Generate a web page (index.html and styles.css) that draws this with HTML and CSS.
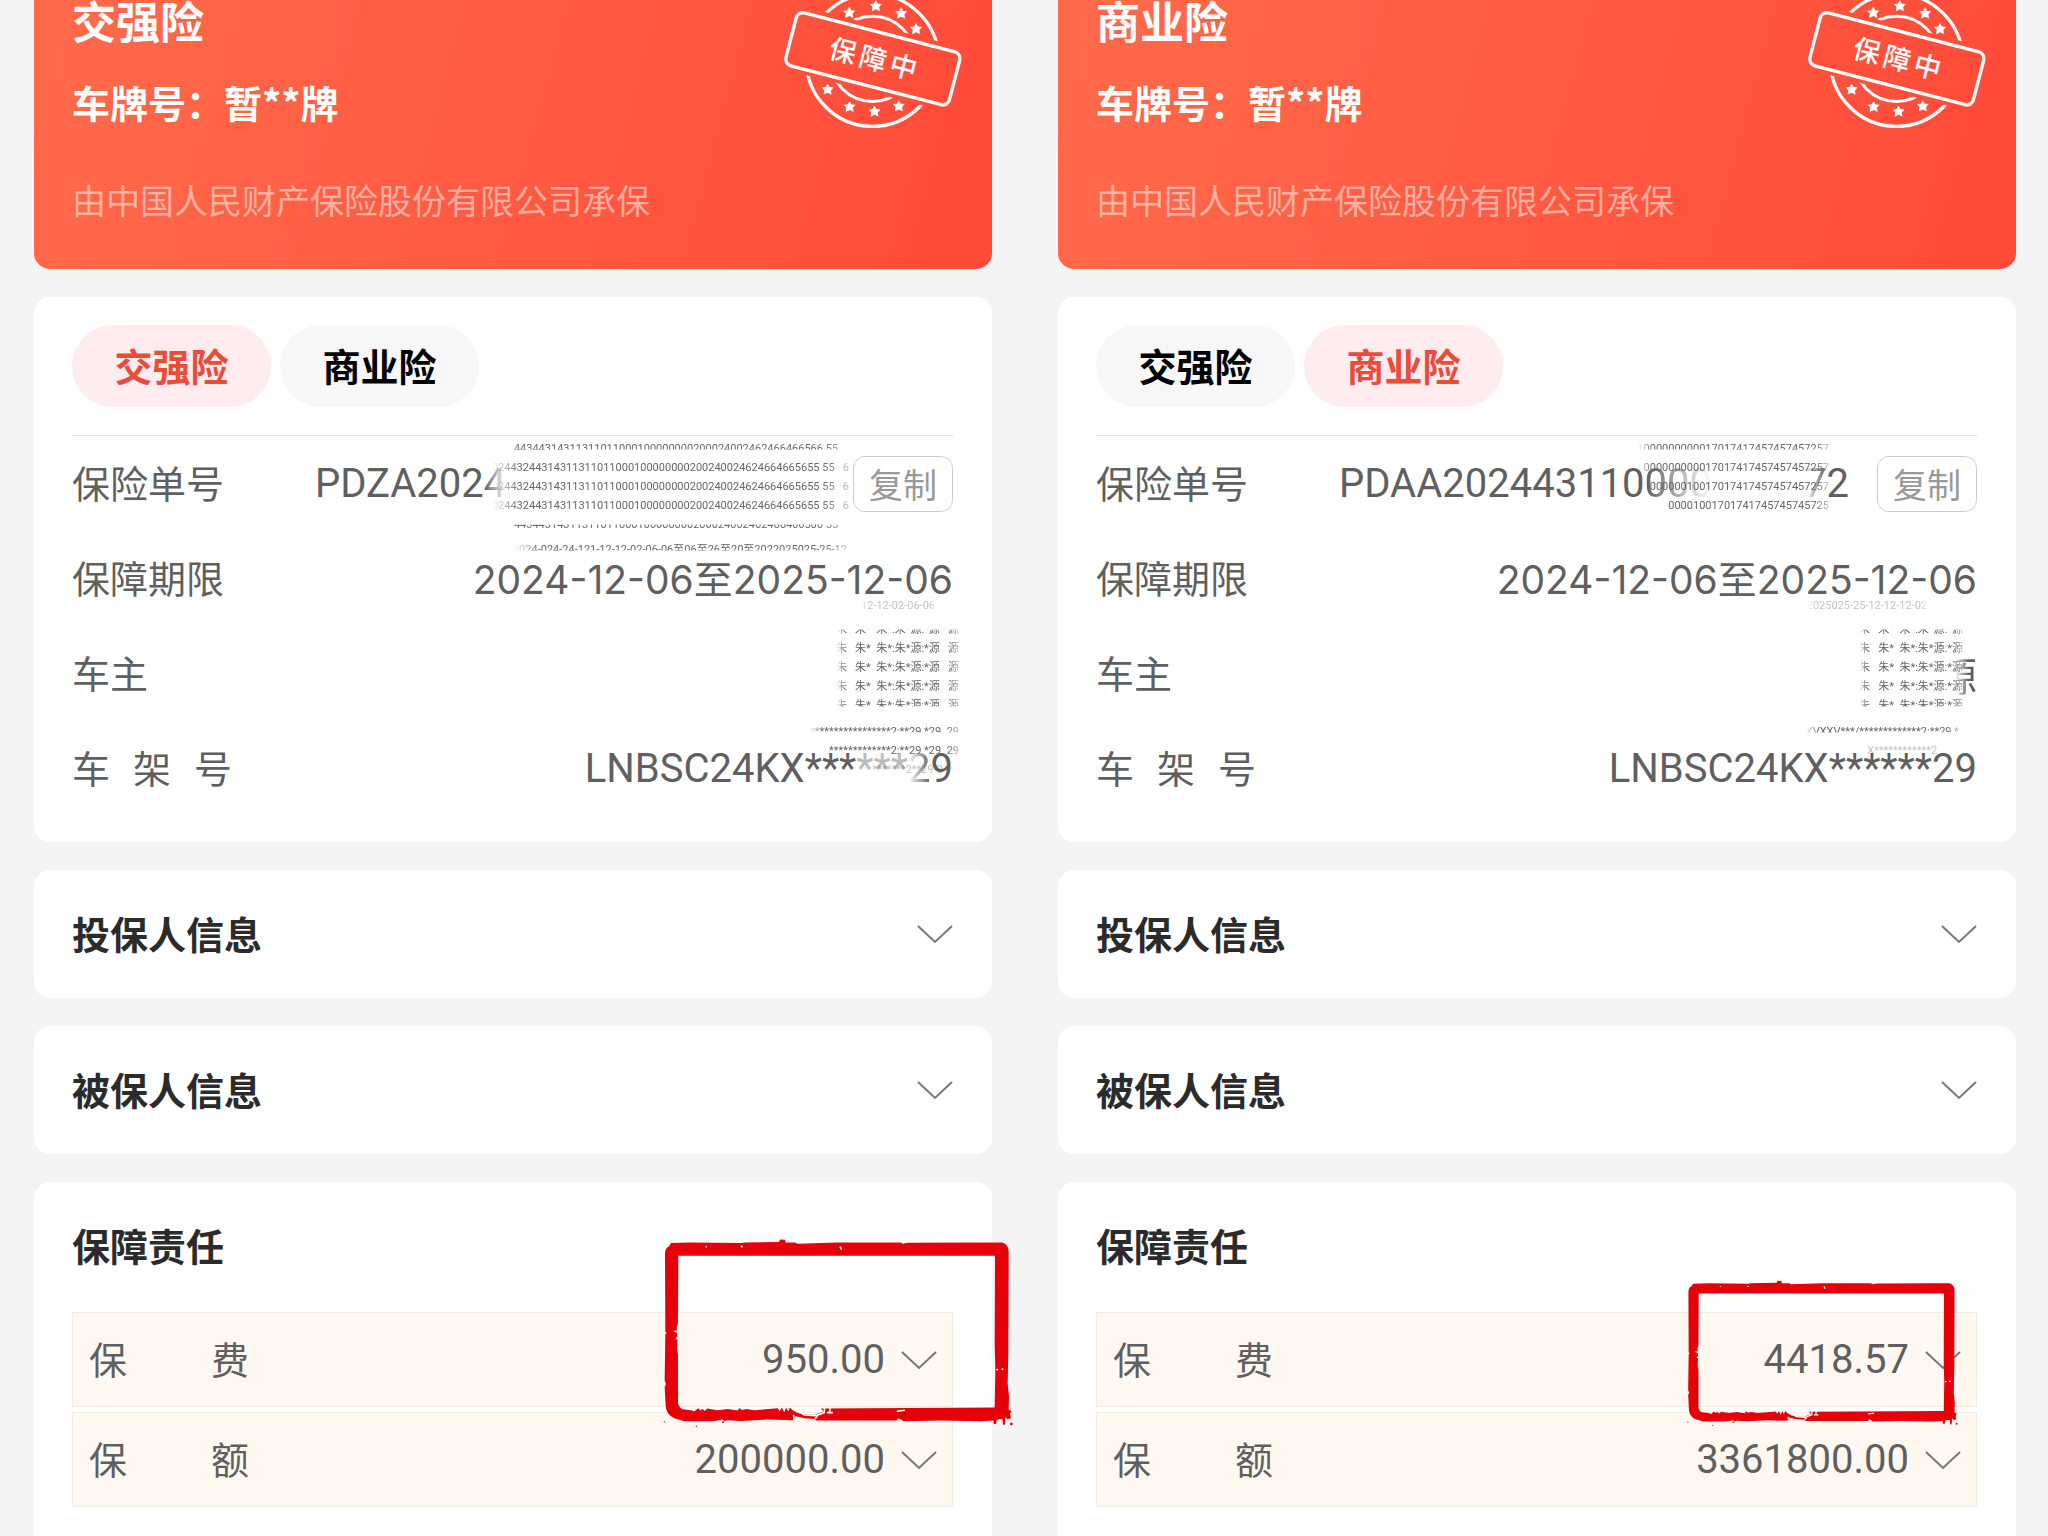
FILE: index.html
```html
<!DOCTYPE html>
<html lang="zh-CN">
<head>
    <meta charset="UTF-8">
    <meta name="viewport" content="width=device-width, initial-scale=1.0">
    <title>保单详情</title>
    <link rel="stylesheet" href="styles.css">
</head>
<body>
    <!-- Shared shapes -->
    <svg class="defs" aria-hidden="true">
        <symbol id="arrow" viewBox="0 0 36 20">
            <path d="M1 2 L18 18 L35 2" fill="none" stroke="currentColor" stroke-width="2"/>
        </symbol>
        <symbol id="star" viewBox="-18 -18 36 36">
            <path d="M0 -18 L6 -7 L18 -6 L10 3 L12 16 L0 10 L-12 16 L-10 3 L-18 -6 L-6 -7 Z" fill="#fff"/>
        </symbol>
        <mask id="ringMask" maskUnits="userSpaceOnUse" x="120" y="-40" width="560" height="460">
            <rect x="120" y="-40" width="560" height="460" fill="#fff"/>
            <rect x="-280" y="-99" width="560" height="198" transform="translate(399 176) rotate(14.5)" fill="#000"/>
        </mask>
        <symbol id="stamp" viewBox="120 0 560 400">
            <g fill="none" stroke="#fff" stroke-width="10">
                <g mask="url(#ringMask)">
                    <circle cx="397" cy="181" r="199"/>
                    <circle cx="397" cy="177" r="128" stroke-width="9"/>
                </g>
                <rect x="-254" y="-82" width="508" height="164" rx="20" transform="translate(398 177) rotate(14.5)"/>
            </g>
            <use href="#star" x="309" y="20" width="36" height="36"/>
            <use href="#star" x="389" y="0" width="36" height="36"/>
            <use href="#star" x="465" y="22" width="36" height="36"/>
            <use href="#star" x="510" y="69" width="36" height="36"/>
            <use href="#star" x="244" y="251" width="36" height="36"/>
            <use href="#star" x="310" y="303" width="36" height="36"/>
            <use href="#star" x="385" y="317" width="36" height="36"/>
            <use href="#star" x="458" y="301" width="36" height="36"/>
            <text class="stamp-text" transform="translate(399 176) rotate(14.5)" x="-94 0 94" y="31">保障中</text>
        </symbol>
        <symbol id="frame" viewBox="60 80 1060 570">
            <path fill="#e60009" fill-rule="evenodd" d="M90 98 L150 96 L300 98 L314 96 L414 95 L418 87 L432 88 L434 96 L462 96 L470 100 L590 96 L780 96 L786 100 L800 97 L1000 96 L1084 96 Q1104 102 1104 124 L1103 420 L1101 520 L1105 560 L1104 598 L1112 602 L1108 612 L1111 624 L1101 627 L1094 620 L1093 643 L1087 644 L1086 628 L1077 626 L1068 630 L1066 641 L1059 641 L1058 631 L1020 633 L900 631 L786 633 L776 626 L768 631 L526 631 L521 626 L490 624 L462 617 L459 630 L380 628 L300 632 L258 630 L250 634 L246 628 L216 633 L130 633 L100 624 Q74 612 74 585 L71 530 L75 522 L71 510 L73 372 L77 368 L73 364 L72 130 Q72 112 84 108 Z
                M112 136 L111 338 L107 350 L108 360 L96 362 L108 368 L109 380 L103 384 L109 388 L108 420 L111 430 L111 580 Q114 592 124 597 L150 600 L160 603 L172 594 L178 600 L185 596 L191 602 L199 595 L230 600 L260 596 L290 601 L296 593 L302 599 L316 596 L340 600 L411 594 L416 603 L423 592 L430 606 L436 592 L442 604 L447 592 L455 600 L472 609 L520 614 L548 604 L540 595 L1062 592 L1064 480 L1062 400 L1063 136 Z"/>
            <g fill="none" stroke="#fff" stroke-width="5">
                <path d="M470 600 L490 614 L526 616 L550 607 L551 592"/>
                <path d="M558 607 L576 607 M568 592 L566 606 M460 630 L458 614 M522 626 L530 618"/>
                <path d="M768 603 L792 600 M770 626 L784 632 M598 108 L602 118 M300 107 L305 110"/>
                <path d="M1068 476 L1071 480 M1083 475 L1088 478 M195 108 L197 110"/>
            </g>
            <g fill="#e60009">
                <circle cx="1112" cy="641" r="4"/>
                <circle cx="166" cy="648" r="2"/>
                <circle cx="246" cy="636" r="3"/>
                <circle cx="70" cy="635" r="2"/>
            </g>
        </symbol>
    </svg>

    <main class="page">
        <!-- Compulsory insurance -->
        <section class="panel">
            <header class="hero">
                <h1>交强险</h1>
                <p class="plate">车牌号：暂**牌</p>
                <p class="insurer">由中国人民财产保险股份有限公司承保</p>
                <svg class="stamp"><use href="#stamp"/></svg>
            </header>

            <div class="card info">
                <nav class="tabs">
                    <button class="tab active" type="button">交强险</button>
                    <button class="tab" type="button">商业险</button>
                </nav>
                <dl class="rows">
                    <div class="row">
                        <dt>保险单号</dt>
                        <dd class="policy">
                            <span class="number">PDZA202<span class="fade-right">4</span></span>
                            <button class="copy" type="button">复制</button>
                        </dd>
                        <div class="smudge policy-left" aria-hidden="true">
                            <span class="cut-bottom">44344314311311011000100000000200024002462466466566 55 &nbsp; &nbsp;</span>
                            <span>02443244314311311011000100000000200240024624664665655 55 &nbsp; 6</span>
                            <span>02443244314311311011000100000000200240024624664665655 55 &nbsp; 6</span>
                            <span>02443244314311311011000100000000200240024624664665655 55 &nbsp; 6</span>
                            <span class="cut-top">44344314311311011000100000000200024002462466466566 55 &nbsp; &nbsp;</span>
                        </div>
                    </div>
                    <div class="row">
                        <dt>保障期限</dt>
                        <dd class="date">2024-12-06至2025-12-06</dd>
                        <div class="smudge date-above" aria-hidden="true">
                            <span class="cut-bottom">2024-024-24-121-12-12-02-06-06至06至26至20至2022025025-25-12</span>
                        </div>
                        <div class="smudge date-below" aria-hidden="true">
                            <span class="faint">12-12-02-06-06</span>
                        </div>
                    </div>
                    <div class="row">
                        <dt>车主</dt>
                        <dd></dd>
                        <div class="smudge owner-left" aria-hidden="true">
                            <span class="cut-top">朱 &nbsp; 朱* &nbsp;朱*:朱*源:*源 &nbsp; 源</span>
                            <span>朱 &nbsp; 朱* &nbsp;朱*:朱*源:*源 &nbsp; 源</span>
                            <span>朱 &nbsp; 朱* &nbsp;朱*:朱*源:*源 &nbsp; 源</span>
                            <span>朱 &nbsp; 朱* &nbsp;朱*:朱*源:*源 &nbsp; 源</span>
                            <span class="cut-bottom">朱 &nbsp; 朱* &nbsp;朱*:朱*源:*源 &nbsp; 源</span>
                        </div>
                    </div>
                    <div class="row">
                        <dt class="spread">车 架 号</dt>
                        <dd>LNBSC24KX***<span class="worn">***</span><span class="fade-left">2</span>9</dd>
                        <div class="smudge vin-left" aria-hidden="true">
                            <span class="cut-bottom">*****************2:**29 *29 &nbsp;29</span>
                            <span>*************2:**29 *29 &nbsp;29</span>
                            <span class="faint">*******2**29 2 &nbsp; &nbsp; &nbsp;</span>
                        </div>
                    </div>
                </dl>
            </div>

            <button class="card section-toggle" type="button">
                <span>投保人信息</span>
                <svg class="arrow"><use href="#arrow"/></svg>
            </button>
            <button class="card section-toggle" type="button">
                <span>被保人信息</span>
                <svg class="arrow"><use href="#arrow"/></svg>
            </button>

            <div class="card duty">
                <h2>保障责任</h2>
                <div class="fee">
                    <span class="spread">保 费</span>
                    <button class="amount" type="button">950.00 <svg class="arrow"><use href="#arrow"/></svg></button>
                    <svg class="frame frame-large"><use href="#frame"/></svg>
                </div>
                <div class="fee">
                    <span class="spread">保 额</span>
                    <button class="amount" type="button">200000.00 <svg class="arrow"><use href="#arrow"/></svg></button>
                </div>
            </div>
        </section>

        <!-- Commercial insurance -->
        <section class="panel">
            <header class="hero">
                <h1>商业险</h1>
                <p class="plate">车牌号：暂**牌</p>
                <p class="insurer">由中国人民财产保险股份有限公司承保</p>
                <svg class="stamp"><use href="#stamp"/></svg>
            </header>

            <div class="card info">
                <nav class="tabs">
                    <button class="tab" type="button">交强险</button>
                    <button class="tab active" type="button">商业险</button>
                </nav>
                <dl class="rows">
                    <div class="row">
                        <dt>保险单号</dt>
                        <dd class="policy">
                            <span class="number">PDAA202443110<span class="fade-right">000</span><span class="tail"><span class="fade-left">7</span>2</span></span>
                            <button class="copy" type="button">复制</button>
                        </dd>
                        <div class="smudge policy-right" aria-hidden="true">
                            <span class="cut-bottom">1000000000017017417457457457257</span>
                            <span>000000000017017417457457457257</span>
                            <span>00000010017017417457457457257</span>
                            <span>00001001701741745745745725</span>
                        </div>
                    </div>
                    <div class="row">
                        <dt>保障期限</dt>
                        <dd class="date">2024-12-06至2025-12-06</dd>
                        <div class="smudge date-below date-below-right" aria-hidden="true">
                            <span class="faint">2025025-25-12-12-12-02</span>
                        </div>
                    </div>
                    <div class="row">
                        <dt>车主</dt>
                        <dd><span class="half">源</span></dd>
                        <div class="smudge owner-right" aria-hidden="true">
                            <span class="cut-top">朱 &nbsp; 朱* &nbsp;朱*:朱*源:*源</span>
                            <span>朱 &nbsp; 朱* &nbsp;朱*:朱*源:*源</span>
                            <span>朱 &nbsp; 朱* &nbsp;朱*:朱*源:*源</span>
                            <span>朱 &nbsp; 朱* &nbsp;朱*:朱*源:*源</span>
                            <span class="cut-bottom">朱 &nbsp; 朱* &nbsp;朱*:朱*源:*源</span>
                        </div>
                    </div>
                    <div class="row">
                        <dt class="spread">车 架 号</dt>
                        <dd>LNBSC24KX******29</dd>
                        <div class="smudge vin-right" aria-hidden="true">
                            <span class="cut-bottom">XVXXV***/*************2:**29 *</span>
                            <span class="faint">X************2 &nbsp; &nbsp; &nbsp; &nbsp;</span>
                        </div>
                    </div>
                </dl>
            </div>

            <button class="card section-toggle" type="button">
                <span>投保人信息</span>
                <svg class="arrow"><use href="#arrow"/></svg>
            </button>
            <button class="card section-toggle" type="button">
                <span>被保人信息</span>
                <svg class="arrow"><use href="#arrow"/></svg>
            </button>

            <div class="card duty">
                <h2>保障责任</h2>
                <div class="fee">
                    <span class="spread">保 费</span>
                    <button class="amount" type="button">4418.57 <svg class="arrow"><use href="#arrow"/></svg></button>
                    <svg class="frame frame-small"><use href="#frame"/></svg>
                </div>
                <div class="fee">
                    <span class="spread">保 额</span>
                    <button class="amount" type="button">3361800.00 <svg class="arrow"><use href="#arrow"/></svg></button>
                </div>
            </div>
        </section>
    </main>
</body>
</html>
```

FILE: styles.css
```css
/* Base styles */
:root {
    --bg: #f4f4f4;
    --text: #2b2b2b;
    --muted: #5f5f5f;
    --light: #999;
    --accent: #ea4c3a;
    --cjk: "Noto Sans CJK SC", sans-serif;
}

* {
    box-sizing: border-box;
}

body {
    margin: 0;
    background: var(--bg);
    color: var(--text);
    font-family: var(--cjk);
    font-size: 38px;
}

h1, h2, p, dl, dd {
    margin: 0;
}

button {
    border: none;
    margin: 0;
    padding: 0;
    background: none;
    color: inherit;
    font: inherit;
    cursor: pointer;
}

.defs {
    position: absolute;
    width: 0;
    height: 0;
}

.page {
    display: grid;
    grid-template-columns: 1fr 1fr;
    min-height: 100vh;
}

.panel {
    display: flex;
    flex-direction: column;
    gap: 28px;
    padding: 0 32px 0 34px;
}

/* Red header */
.hero {
    position: relative;
    padding: 0 38px 45px;
    border-radius: 0 0 16px 16px;
    background: linear-gradient(105deg, #ff6b4a, #ff5a42 50%, #ff4a37);
    color: #fff;
}

.hero h1 {
    font-size: 44px;
    line-height: 40px;
}

.plate {
    margin-top: 34px;
    font-weight: bold;
    line-height: 56px;
}

.insurer {
    margin-top: 46px;
    font-size: 34px;
    line-height: 48px;
    color: rgba(255, 255, 255, 0.5);
}

.stamp {
    position: absolute;
    top: 0;
    right: 25px;
    width: 187px;
    height: 133px;
}

.stamp-text {
    fill: #fff;
    font-family: var(--cjk);
    font-size: 82px;
    font-weight: 500;
    text-anchor: middle;
}

/* Cards */
.card {
    border-radius: 16px;
    background: #fff;
}

.info {
    padding: 28px 39px 26px 38px;
}

.tabs {
    display: flex;
    gap: 9px;
    padding-bottom: 28px;
    border-bottom: 1px solid #e2e2e2;
}

.tab {
    width: 199px;
    height: 82px;
    padding-bottom: 4px;
    border-radius: 41px;
    background: #f7f7f7;
    color: #000;
    font-weight: bold;
}

.tab.active {
    background: #feecef;
    color: var(--accent);
}

.row {
    position: relative;
    display: flex;
    align-items: center;
    justify-content: space-between;
    height: 95px;
    color: var(--muted);
}

.row dt,
.row .date,
.fee .spread,
.section-toggle span {
    padding-bottom: 4px;
}

.row dd,
.amount {
    font-family: Roboto, var(--cjk);
    font-size: 40px;
}

.row .date {
    font-family: Inter, var(--cjk);
    font-size: 39px;
}

.spread {
    width: 160px;
    text-align-last: justify;
}

.policy {
    display: flex;
    align-items: center;
    gap: 28px;
}

.number {
    display: flex;
    width: 510px;
}

.tail {
    margin-left: auto;
}

.copy {
    width: 100px;
    height: 56px;
    border: 1px solid #ccc;
    border-radius: 12px;
    color: var(--light);
    font-family: var(--cjk);
    font-size: 34px;
    line-height: 50px;
}

/* Smudged-out text */
.fade-right {
    mask-image: linear-gradient(to right, #000, transparent);
}

.fade-left {
    display: inline-block;
    mask-image: linear-gradient(to right, transparent, #000);
}

.worn {
    color: #bbb;
}

.half {
    display: inline-block;
    mask-image: linear-gradient(to right, transparent 45%, #000 80%);
}

.smudge {
    position: absolute;
    color: #666;
    font-family: Roboto, var(--cjk);
    font-size: 11px;
    line-height: 19px;
    text-align: right;
    white-space: nowrap;
    mask-image: linear-gradient(to right, transparent, #000 8%, #000 92%, rgba(0, 0, 0, 0.4));
}

.smudge span {
    display: block;
    height: 19px;
}

.smudge .cut-bottom {
    clip-path: inset(0 0 45% 0);
}

.smudge .cut-top {
    clip-path: inset(50% 0 0 0);
}

.smudge .faint {
    opacity: 0.4;
}

.policy-left {
    top: 3px;
    right: 104px;
}

.policy-right {
    top: 3px;
    right: 148px;
}

.date-above {
    top: 9px;
    right: 106px;
}

.date-below {
    top: 65px;
    right: 18px;
}

.date-below-right {
    right: 50px;
}

.owner-left {
    top: -6px;
    right: -6px;
}

.owner-right {
    top: -6px;
    right: 14px;
}

.vin-left {
    top: 1px;
    right: -6px;
}

.vin-right {
    top: 1px;
    right: 18px;
}

/* Collapsed sections */
.section-toggle {
    display: flex;
    align-items: center;
    justify-content: space-between;
    height: 128px;
    padding: 0 39px 0 38px;
    color: var(--text);
    font-weight: bold;
}

.arrow {
    flex: none;
    width: 36px;
    height: 20px;
    color: #777;
}

/* Coverage */
.duty {
    flex: 1;
    padding: 0 39px 0 38px;
    border-radius: 16px 16px 0 0;
}

.duty h2 {
    padding-bottom: 4px;
    font-size: 38px;
    line-height: 126px;
}

.fee {
    position: relative;
    display: flex;
    align-items: center;
    justify-content: space-between;
    height: 95px;
    margin-bottom: 5px;
    padding: 0 15px 0 16px;
    border: 1px solid #f3ebe0;
    background: #fff8f1;
    color: var(--muted);
}

.amount {
    display: flex;
    align-items: center;
    gap: 16px;
}

.frame {
    position: absolute;
    z-index: 1;
    pointer-events: none;
}

.frame-large {
    top: -76px;
    right: -62px;
    width: 353px;
    height: 190px;
}

.frame-small {
    top: -34px;
    right: 17px;
    width: 274px;
    height: 147px;
}
```
